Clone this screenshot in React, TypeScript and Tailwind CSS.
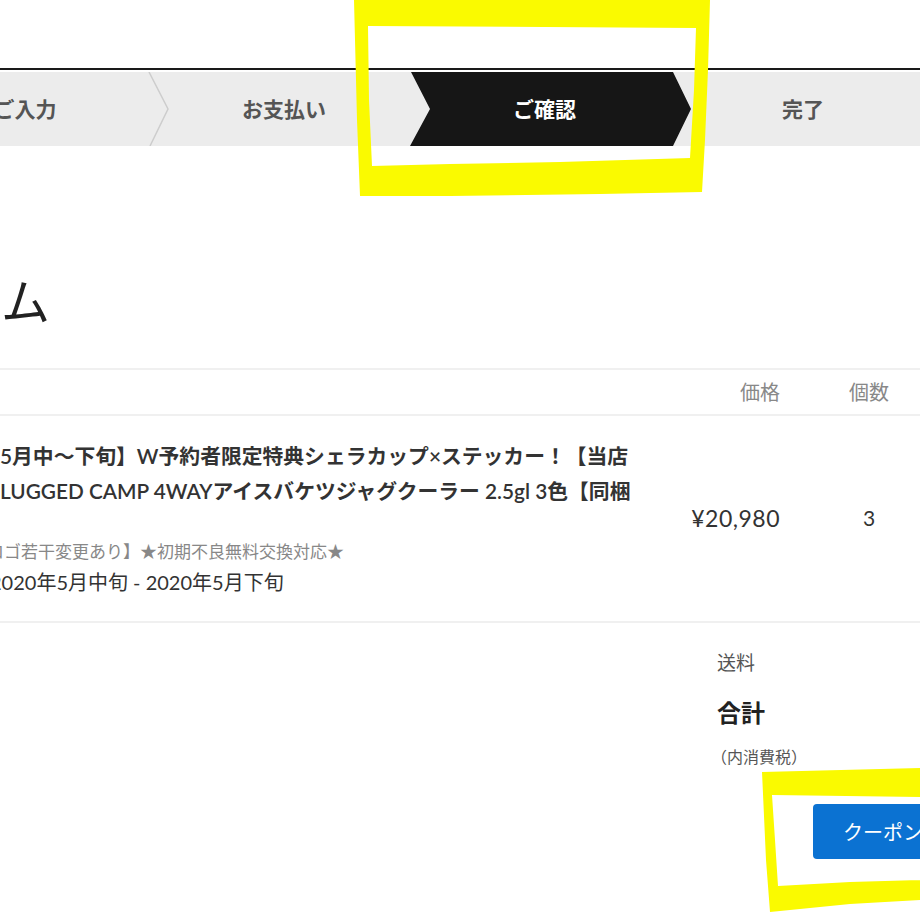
import React from "react";

export default function App() {
  return (
    <div
      className="relative w-[920px] h-[920px] overflow-hidden bg-white"
      style={{ fontFamily: '"Lato", "Noto Sans CJK JP", sans-serif' }}
    >
      <div className="pt-[68px]">
        <div className="h-[2px] bg-[#1a1a1a]" />
        <div className="h-[2px] bg-white" />
        {/* steps */}
        <div className="h-[74px] bg-[#ececec] flex ml-[-110px] w-[1100px]">
          <div className="relative w-[260px] flex items-center justify-center pl-[10px] text-[21px] font-bold text-[#555] whitespace-nowrap">
            ご入力
            <svg className="absolute right-[-20px] top-0" width="22" height="74" viewBox="0 0 22 74">
              <polyline points="1,0 20,37 2,74" fill="none" stroke="#cdcdcd" strokeWidth="1.5" />
            </svg>
          </div>
          <div className="w-[260px] flex items-center justify-center pl-[8px] text-[21px] font-bold text-[#555]">
            お支払い
          </div>
          <div className="w-[281px] mr-[-21px] bg-[#161616] flex items-center justify-center pr-[12px] text-[21px] font-bold text-white [clip-path:polygon(1px_0,263px_0,100%_50%,263px_100%,0_100%,20px_50%)]">
            ご確認
          </div>
          <div className="w-[260px] flex items-center justify-center pl-[6px] text-[21px] font-bold text-[#555]">
            完了
          </div>
        </div>

        {/* title */}
        <div className="mt-[131px] ml-[-141px] h-[48px] text-[49px] leading-[48px] text-[#222] whitespace-nowrap">
          アイテム
        </div>

        {/* table */}
        <div className="mt-[43px] border-t-2 border-[#f0f0f0]">
          <div className="flex h-[44px] items-center text-[20px] text-[#888]">
            <div className="w-[660px]" />
            <div className="w-[120px] text-right">価格</div>
            <div className="ml-[39px] w-[100px] text-center">個数</div>
          </div>
          <div className="flex items-center border-t-2 border-b-2 border-[#f0f0f0] pt-[22px] pb-[24px]">
            <div className="w-[660px] whitespace-nowrap">
              <div className="text-[20.8px] leading-[35px] font-semibold text-[#333]">
                5月中～下旬】W予約者限定特典シェラカップ×ステッカー！【当店
              </div>
              <div className="text-[20.8px] leading-[35px] font-semibold text-[#333]">
                LUGGED CAMP 4WAYアイスバケツジャグクーラー 2.5gl 3色【同梱
              </div>
              <div className="mt-[29px] ml-[-13px] text-[17px] leading-[30px] text-[#888]">
                ロゴ若干変更あり】★初期不良無料交換対応★
              </div>
              <div className="ml-[-10px] text-[20px] leading-[30px] text-[#333]">
                2020年5月中旬 - 2020年5月下旬
              </div>
            </div>
            <div className="w-[120px] text-right text-[23px] tracking-[0.5px] text-[#333] pt-[1px]">¥20,980</div>
            <div className="ml-[39px] w-[100px] text-center text-[21px] text-[#333] pt-[1px]">3</div>
          </div>
        </div>

        {/* summary */}
        <div className="ml-[717px] mt-[25px] whitespace-nowrap">
          <div className="text-[19px] leading-[30px] text-[#555]">送料</div>
          <div className="mt-[20px] text-[24px] leading-[30px] font-bold text-[#222]">合計</div>
          <div className="mt-[17px] ml-[-6px] text-[16px] leading-[24px] text-[#555]">（内消費税）</div>
        </div>
        <div className="ml-[813px] mt-[35px] h-[55px] w-[160px] rounded-[4px] bg-[#0b72d2] flex items-center pl-[30px] text-[20px] text-white whitespace-nowrap">
          クーポン
        </div>
      </div>

      {/* yellow highlights */}
      <svg className="absolute left-0 top-0 pointer-events-none" width="920" height="920" viewBox="0 0 920 920">
        <path
          fillRule="evenodd"
          fill="#fafa00"
          d="M354,0 L710,0 L708,70 L705,140 L702,192 L600,194 L450,196 L360,196 L357,120 Z M368,26 L696,28 L694,90 L690,158 L560,162 L450,164 L372,166 L369,100 Z"
        />
        <path
          fillRule="evenodd"
          fill="#fafa00"
          d="M762,772 L920,768 L920,900 L850,904 L770,912 L766,860 Z M772,795 L920,797 L920,880 L850,882 L778,886 L775,840 Z"
        />
      </svg>
    </div>
  );
}
